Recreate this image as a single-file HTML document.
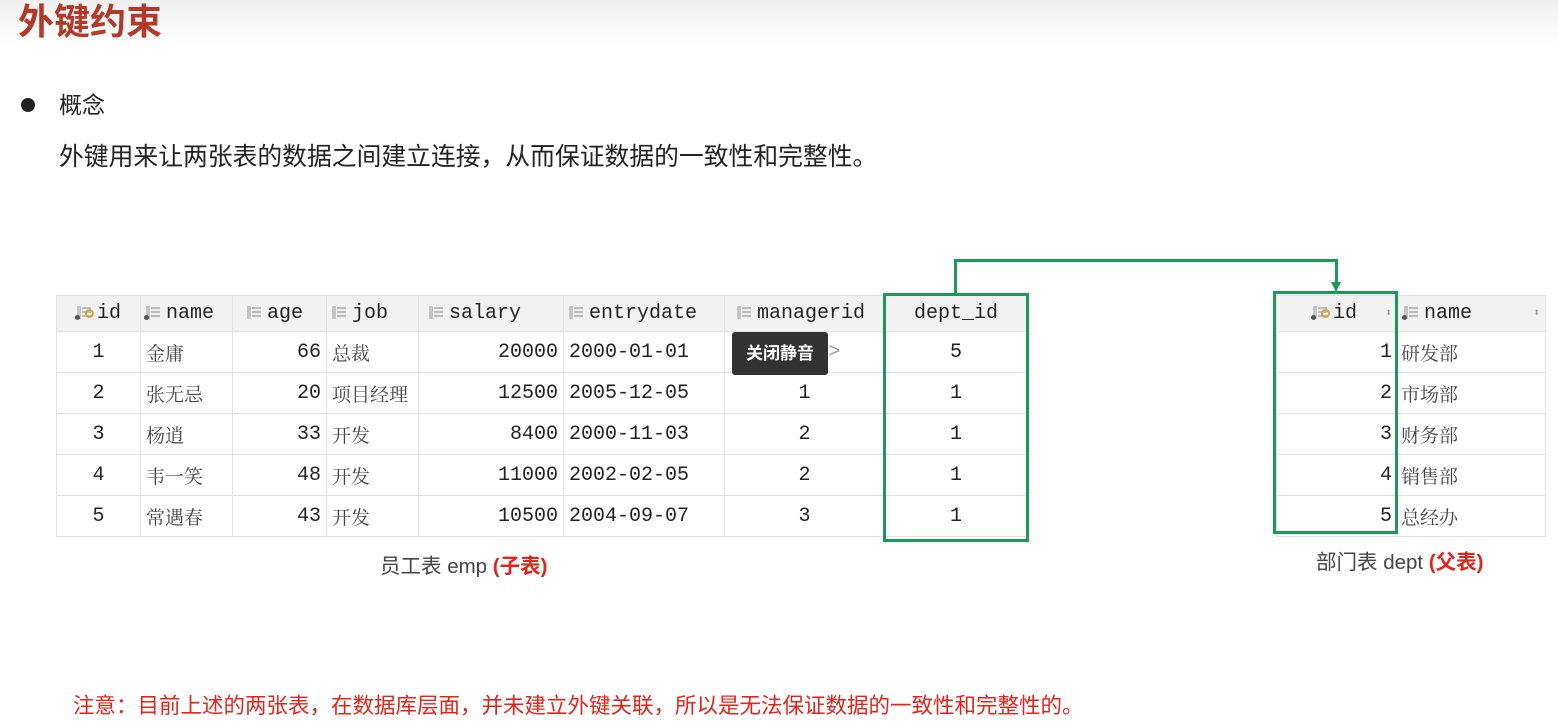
<!DOCTYPE html>
<html><head><meta charset="utf-8"><style>
*{margin:0;padding:0;box-sizing:border-box}
body{width:1558px;height:727px;position:relative;background:#fff;overflow:hidden;font-family:"Liberation Sans","Noto Sans CJK SC",sans-serif}
.top{position:absolute;left:0;top:0;width:1558px;height:48px;background:linear-gradient(#f0f0f0,#fff)}
.title{position:absolute;left:18px;top:0px;font-size:36px;font-weight:bold;color:#b23a2a;line-height:44px}
.bul{position:absolute;left:21px;top:98px;width:14px;height:14px;border-radius:50%;background:#222}
.t1{position:absolute;left:59px;top:90px;font-size:23px;color:#222;line-height:30px}
.t2{position:absolute;left:59px;top:142px;font-size:24.8px;color:#222;line-height:32px}
table{position:absolute;border-collapse:collapse;table-layout:fixed;font-family:"Liberation Mono","Noto Sans CJK SC",monospace;font-size:20px;color:#222}
td,th{border:1px solid #e2e2e2;height:41px;padding:0 5px;white-space:nowrap;overflow:hidden}
th{background:#f2f2f2;font-weight:normal;height:36px;text-align:left}
td.c{text-align:center}td.r{text-align:right}
.cn{font-family:"Noto Serif CJK SC","Noto Sans CJK SC",serif;color:#444;font-size:19px}
.ic{display:inline-block;width:14px;height:13px;background:
linear-gradient(#c4c4c4,#c4c4c4) 0 0/4px 13px no-repeat,
repeating-linear-gradient(#bbb 0 2px,#eee 2px 4px) 5px 1px/9px 11px no-repeat;margin-right:6px;vertical-align:-1px;position:relative}
.key::after{content:"";position:absolute;left:8px;top:3px;width:5px;height:5px;border:2px solid #d9a13a;border-radius:50%}
.dot::before{content:"";position:absolute;left:-2px;top:9px;width:5px;height:5px;border-radius:50%;background:#555}
.box{position:absolute;border:3px solid #1a9a55}
.line{position:absolute;background:#1a9a55}
.cap{position:absolute;font-size:20.5px;color:#444}
.cap b{color:#e0251b;font-weight:bold}
.tip{position:absolute;left:732px;top:332px;width:96px;height:43px;background:#333;border-radius:3px;color:#fff;font-size:17px;font-weight:bold;line-height:43px;text-align:center}
.note{position:absolute;left:73px;top:692px;font-size:21.5px;color:#e0251b;line-height:28px}
.sort{color:#999;font-size:11px;float:right;margin-top:4px}
</style></head><body>
<div class="top"></div>
<div class="title">外键约束</div>
<div class="bul"></div>
<div class="t1">概念</div>
<div class="t2">外键用来让两张表的数据之间建立连接，从而保证数据的一致性和完整性。</div>

<table style="left:56px;top:295px;width:971px">
<colgroup><col style="width:84px"><col style="width:92px"><col style="width:94px"><col style="width:92px"><col style="width:145px"><col style="width:161px"><col style="width:160px"><col style="width:143px"></colgroup>
<tr><th style="padding-left:20px"><span class="ic key dot"></span>id</th><th><span class="ic dot"></span>name</th><th style="padding-left:14px"><span class="ic"></span>age</th><th><span class="ic"></span>job</th><th style="padding-left:10px"><span class="ic"></span>salary</th><th><span class="ic"></span>entrydate</th><th style="padding-left:12px"><span class="ic"></span>managerid</th><th style="text-align:center">dept_id</th></tr>
<tr><td class="c">1</td><td class="cn">金庸</td><td class="r">66</td><td class="cn">总裁</td><td class="r">20000</td><td>2000-01-01</td><td class="c" style="color:#999">&lt;null&gt;</td><td class="c">5</td></tr>
<tr><td class="c">2</td><td class="cn">张无忌</td><td class="r">20</td><td class="cn">项目经理</td><td class="r">12500</td><td>2005-12-05</td><td class="c">1</td><td class="c">1</td></tr>
<tr><td class="c">3</td><td class="cn">杨逍</td><td class="r">33</td><td class="cn">开发</td><td class="r">8400</td><td>2000-11-03</td><td class="c">2</td><td class="c">1</td></tr>
<tr><td class="c">4</td><td class="cn">韦一笑</td><td class="r">48</td><td class="cn">开发</td><td class="r">11000</td><td>2002-02-05</td><td class="c">2</td><td class="c">1</td></tr>
<tr><td class="c">5</td><td class="cn">常遇春</td><td class="r">43</td><td class="cn">开发</td><td class="r">10500</td><td>2004-09-07</td><td class="c">3</td><td class="c">1</td></tr>
</table>
<div class="tip">关闭静音</div>

<table style="left:1276px;top:295px;width:269px">
<colgroup><col style="width:121px"><col style="width:148px"></colgroup>
<tr><th style="padding-left:36px"><span class="ic key dot"></span>id<span class="sort">⬍</span></th><th style="padding-left:6px"><span class="ic dot"></span>name<span class="sort">⬍</span></th></tr>
<tr><td class="r" style="height:40px">1</td><td class="cn" style="padding-left:3px">研发部</td></tr>
<tr><td class="r" style="height:40px">2</td><td class="cn" style="padding-left:3px">市场部</td></tr>
<tr><td class="r" style="height:40px">3</td><td class="cn" style="padding-left:3px">财务部</td></tr>
<tr><td class="r" style="height:40px">4</td><td class="cn" style="padding-left:3px">销售部</td></tr>
<tr><td class="r" style="height:39px">5</td><td class="cn" style="padding-left:3px">总经办</td></tr>
</table>

<div class="box" style="left:883px;top:293px;width:146px;height:249px"></div>
<div class="box" style="left:1273px;top:291px;width:125px;height:243px"></div>
<div class="line" style="left:954px;top:259px;width:3px;height:35px"></div>
<div class="line" style="left:954px;top:259px;width:384px;height:3px"></div>
<div class="line" style="left:1335px;top:259px;width:3px;height:25px"></div>
<div style="position:absolute;left:1331px;top:282px;width:0;height:0;border-left:5px solid transparent;border-right:5px solid transparent;border-top:10px solid #1a9a55"></div>

<div class="cap" style="left:380px;top:549px">员工表 emp <b>(子表)</b></div>
<div class="cap" style="left:1316px;top:545px">部门表 dept <b>(父表)</b></div>
<div class="note">注意：目前上述的两张表，在数据库层面，并未建立外键关联，所以是无法保证数据的一致性和完整性的。</div>
</body></html>
